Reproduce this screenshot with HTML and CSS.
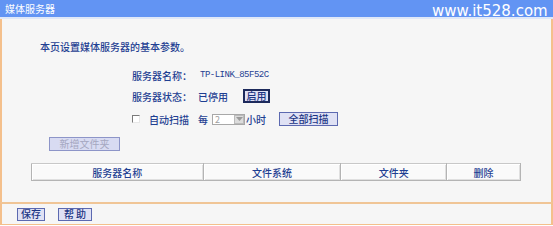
FILE: index.html
```html
<!DOCTYPE html>
<html lang="zh">
<head>
<meta charset="utf-8">
<title>媒体服务器</title>
<link rel="stylesheet" href="styles.css">
</head>
<body>
<div class="page">
  <div class="header">
    <span class="title">媒体服务器</span>
    <span class="watermark">www.it528.com</span>
  </div>
  <div class="sep-light"></div>
  <div class="content">
    <div class="intro">本页设置媒体服务器的基本参数。</div>
    <div class="form">
      <div class="row r1">
        <span class="label">服务器名称：</span>
        <span class="mono">TP-LINK_85F52C</span>
      </div>
      <div class="row r2">
        <span class="label">服务器状态：</span>
        <span class="status">已停用</span>
        <button class="btn btn-focus">启用</button>
      </div>
      <div class="row r3">
        <span class="check"></span>
        <span class="auto">自动扫描</span>
        <span class="every">每</span>
        <span class="select"><span class="sel-val">2</span><span class="sel-arrow"><svg width="7" height="5" viewBox="0 0 7 5"><path d="M0 0h7L3.5 4z" fill="#9a9a9a"/></svg></span></span>
        <span class="hours">小时</span>
        <button class="btn btn-scan">全部扫描</button>
      </div>
    </div>
    <button class="btn btn-add">新增文件夹</button>
    <table class="grid">
      <tr>
        <th class="c1">服务器名称</th>
        <th class="c2">文件系统</th>
        <th class="c3">文件夹</th>
        <th class="c4">删除</th>
      </tr>
    </table>
  </div>
  <div class="footer">
    <button class="btn btn-foot">保存</button>
    <button class="btn btn-foot btn-help">帮 助</button>
  </div>
</div>
</body>
</html>
```
FILE: styles.css
```css
* { box-sizing: border-box; }
html, body { margin: 0; padding: 0; background: #ffffff; }
body {
  font-family: "Noto Sans CJK SC", "Liberation Sans", sans-serif;
  font-size: 10px;
  font-weight: 500;
  color: #1f3f92;
}
.page { width: 553px; height: 226px; position: relative; }
.header {
  height: 17px;
  background: #6294f3;
  display: flex;
  align-items: center;
  padding-left: 5px;
}
.title { color: #ffffff; font-size: 10px; line-height: 12px; font-weight: 400; }
.watermark {
  position: absolute;
  left: 432px;
  top: 2px;
  font-family: "DejaVu Sans", sans-serif;
  font-size: 15px;
  line-height: 18px;
  font-weight: 400;
  color: #ffffff;
}
.sep-light { height: 2px; background: #dfe8f8; }
.content {
  height: 183px;
  background: #f6f6f6;
  border-left: 2px solid #f4c08c;
  border-right: 2px solid #f4c08c;
  padding-top: 22px;
}
.intro { margin-left: 38px; line-height: 12px; height: 12px; }
.form { display: flex; flex-direction: column; margin-left: 130px; margin-top: 15px; }
.row { display: flex; align-items: center; height: 14px; }
.r2 { margin-top: 7px; }
.r3 { margin-top: 9px; }
.label { width: 66px; }
.mono {
  font-family: "Liberation Mono", monospace;
  font-size: 9px;
  letter-spacing: -0.5px;
  font-weight: 400;
  color: #1f3f92;
  margin-left: 2px;
}
.status { width: 45px; }
.btn {
  font-family: "Noto Sans CJK SC", sans-serif;
  font-size: 10px;
  font-weight: 500;
  line-height: 10px;
  color: #1c3584;
  background: #dfe1f4;
  border: 1px solid #5c69b0;
  padding: 0;
  margin: 0;
  height: 13px;
  display: flex;
  align-items: center;
  justify-content: center;
}
.btn-focus { width: 27px; border: 2px solid #1d2a5c; height: 14px; }
.check {
  width: 8px; height: 8px;
  border: 1px solid #7a7a7a;
  border-right-color: #e8e8e8;
  border-bottom-color: #e8e8e8;
  background: #ffffff;
}
.auto { margin-left: 9px; }
.every { margin-left: 9px; }
.select {
  margin-left: 4px;
  width: 33px;
  height: 11px;
  border: 1px solid #a8a8a8;
  background: #ffffff;
  display: flex;
  align-items: center;
  justify-content: space-between;
}
.sel-val { color: #a0a0a0; font-size: 9px; font-weight: 400; padding-left: 2px; }
.sel-arrow {
  width: 10px; height: 9px;
  background: #dcdcdc;
  border: 1px solid #bbbbbb;
  display: flex; align-items: center; justify-content: center;
}
.hours { margin-left: 1px; }
.btn-scan { width: 59px; margin-left: 13px; height: 14px; }
.btn-add {
  margin-left: 47px;
  margin-top: 11px;
  width: 71px;
  height: 14px;
  color: #a5a7c0;
  font-weight: 400;
  background: #d8dbf2;
  border-color: #8d95c8;
}
.grid {
  margin-left: 29px;
  margin-top: 12px;
  width: 490px;
  border-collapse: collapse;
  height: 17px;
}
.grid th {
  font-weight: 500;
  font-size: 10px;
  color: #1f3f92;
  background: #fafafa;
  border: 1px solid #b4b4b4;
  border-top-color: #c8c8c8;
  box-shadow: inset 1px 1px 0 #ffffff, inset -1px -1px 0 #e0e0e0;
  height: 17px;
  padding: 0;
  text-align: center;
}
.c1 { width: 172px; }
.c2 { width: 138px; }
.c3 { width: 106px; }
.c4 { width: 74px; }
.footer {
  height: 23px;
  background: #f6f6f6;
  border-top: 2px solid #f0c596;
  border-left: 2px solid #f4c08c;
  border-right: 2px solid #f4c08c;
  border-bottom: 1px solid #f4c08c;
  display: flex;
  align-items: center;
  padding-left: 15px;
  gap: 13px;
}
.btn-foot { width: 28px; height: 13px; }
.btn-help { width: 34px; }
```
